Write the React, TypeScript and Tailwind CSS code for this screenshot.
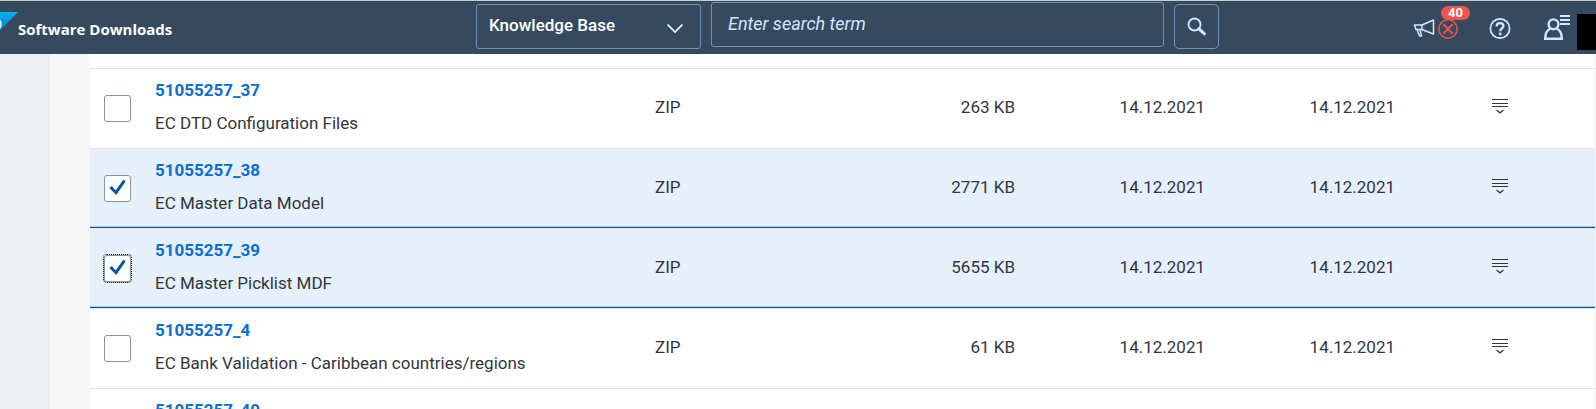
import { useState } from "react";

interface DownloadItem {
  id: string;
  description: string;
  type: string;
  size: string;
  released: string;
  changed: string;
}

const items: DownloadItem[] = [
  { id: "51055257_37", description: "EC DTD Configuration Files", type: "ZIP", size: "263 KB", released: "14.12.2021", changed: "14.12.2021" },
  { id: "51055257_38", description: "EC Master Data Model", type: "ZIP", size: "2771 KB", released: "14.12.2021", changed: "14.12.2021" },
  { id: "51055257_39", description: "EC Master Picklist MDF", type: "ZIP", size: "5655 KB", released: "14.12.2021", changed: "14.12.2021" },
  { id: "51055257_4", description: "EC Bank Validation - Caribbean countries/regions", type: "ZIP", size: "61 KB", released: "14.12.2021", changed: "14.12.2021" },
  { id: "51055257_40", description: "", type: "", size: "", released: "", changed: "" },
];

function Logo() {
  return (
    <svg width="18" height="20" viewBox="0 0 18 20" aria-hidden="true">
      <defs>
        <linearGradient id="logo" x1="0" y1="0" x2="0" y2="1">
          <stop offset="0" stopColor="#00b4f0" />
          <stop offset="1" stopColor="#0a7fc8" />
        </linearGradient>
      </defs>
      <path d="M0 0H18L0 18.500Z" fill="url(#logo)" />
      <path d="M0 7.500C2.300 9 2.300 15 0 17Z" fill="#d8eefa" />
    </svg>
  );
}

function SearchIcon() {
  return (
    <svg width="20" height="20" viewBox="0 0 20 20" fill="none" stroke="#d1e8ff" aria-hidden="true">
      <circle cx="7.500" cy="7.500" r="6" strokeWidth="1.800" />
      <path d="M12 12L17.500 16.800" strokeWidth="3" strokeLinecap="round" />
    </svg>
  );
}

function MegaphoneIcon() {
  return (
    <svg width="22" height="18" viewBox="0 0 22 18" fill="none" stroke="#d1e8ff" strokeWidth="1.500" strokeLinejoin="round" aria-hidden="true">
      <path d="M9 6H1.500L3 10.500H9" />
      <path d="M9 6L20.500 1V15L9 10.500Z" />
      <path d="M4 10.500L6.500 17H8.500L7 10.500" />
    </svg>
  );
}

function ErrorIcon() {
  return (
    <svg width="20" height="20" viewBox="0 0 20 20" fill="none" stroke="#f0524f" strokeWidth="1.500" aria-hidden="true">
      <circle cx="10" cy="10" r="9.200" />
      <path d="M5.300 5.300L14.700 14.700M14.700 5.300L5.300 14.700" strokeWidth="2" />
    </svg>
  );
}

function HelpIcon() {
  return (
    <svg width="22" height="22" viewBox="0 0 22 22" fill="none" stroke="#d1e8ff" aria-hidden="true">
      <circle cx="11" cy="10.500" r="9.600" strokeWidth="1.700" />
      <path d="M7.600 8.500C7.600 6.200 9 5.200 11 5.200S14.400 6.200 14.400 8C14.400 10.300 11.200 10.500 11.200 13.200" strokeWidth="2.300" />
      <path d="M11.200 14.700V17.200" strokeWidth="2.500" />
    </svg>
  );
}

function UserIcon() {
  return (
    <svg width="28" height="27" viewBox="0 0 28 27" fill="none" stroke="#d1e8ff" strokeWidth="2.400" aria-hidden="true">
      <circle cx="10.500" cy="10.300" r="4.900" />
      <path d="M7.500 14.500C4 16 2.200 18.500 2.200 24.800H18.800C18.800 18.500 17 16 13.500 14.500" />
      <path d="M17 2H27M17 6H27M17 10H27" strokeWidth="2" />
    </svg>
  );
}

function MenuIcon() {
  return (
    <svg width="16" height="16" viewBox="0 0 16 16" fill="none" stroke="#32363a" aria-hidden="true">
      <path d="M0 0.500H16M0 4.500H16M0 7.500H16" />
      <path d="M4.500 11L8 13.800L11.500 11" strokeWidth="1.300" />
    </svg>
  );
}

function Header() {
  return (
    <header className="flex h-[54px] shrink-0 items-start border-t border-[#c9cdc6] bg-[#354a5f]">
      <div className="flex w-[476px] items-start pt-[11px]">
        <Logo />
        <h1 className="pt-[5px] font-['Open_Sans',sans-serif] text-[15px] leading-6 font-bold text-white">Software Downloads</h1>
      </div>
      <div className="flex flex-1 items-start pt-px">
        <div className="relative mt-0.5 w-[225px]">
          <select
            aria-label="Search area"
            className="h-[45px] w-full appearance-none rounded-[3px] border border-[#7493b8] bg-transparent pr-10 pb-0.5 pl-3 text-[17px] font-medium text-white"
          >
            <option>Knowledge Base</option>
          </select>
          <svg className="pointer-events-none absolute top-[19px] right-[17px]" width="18" height="11" viewBox="0 0 18 11" fill="none" stroke="#fff" strokeWidth="1.700" aria-hidden="true">
            <path d="M1.500 1.500L9 9L16.500 1.500" />
          </svg>
        </div>
        <input
          type="search"
          aria-label="Search"
          placeholder="Enter search term"
          className="ml-2.5 h-[45px] min-w-0 flex-1 rounded-[3px] border border-[#7493b8] bg-transparent px-4 pb-0.5 text-[18px] text-white italic placeholder:text-[#d1e8ff]"
        />
        <button type="button" aria-label="Start search" className="mt-0.5 ml-2.5 flex h-[45px] w-[45px] items-center justify-center rounded-[5px] border border-[#7493b8]">
          <SearchIcon />
        </button>
      </div>
      <div className="flex w-[377px] items-start justify-end pt-[13px]">
        <button type="button" aria-label="40 notifications" className="relative mr-[31px] flex items-start gap-[3px] pt-[5px]">
          <MegaphoneIcon />
          <ErrorIcon />
          <span className="absolute -top-2 -right-3 h-3.5 w-[29px] rounded-full bg-[#f0524f] text-center text-[13px] leading-[14px] font-bold text-white">40</span>
        </button>
        <button type="button" aria-label="Help" className="mr-8 pt-1">
          <HelpIcon />
        </button>
        <button type="button" aria-label="User menu" className="mr-1.5">
          <UserIcon />
        </button>
        <div className="h-9 w-[19px] bg-black" />
      </div>
    </header>
  );
}

interface ItemRowProps {
  item: DownloadItem;
  selected: boolean;
  focused: boolean;
  onToggle: () => void;
}

function ItemRow({ item, selected, focused, onToggle }: ItemRowProps) {
  const background = selected
    ? "bg-[#e5f0fa] *:shadow-[inset_0_-1px_0_#0a559c,inset_0_-2px_0_#a9c8e4]"
    : "bg-white";
  const outline = focused ? "outline-1 outline-dotted outline-black" : "";

  return (
    <tr className={`h-20 *:border-b *:border-[#e4e4e4] ${background}`}>
      <td className="p-0">
        <div className="flex pl-3.5">
          <input
            type="checkbox"
            aria-label={`Select ${item.id}`}
            checked={selected}
            onChange={onToggle}
            className={`peer h-[27px] w-[27px] appearance-none rounded-[3px] border border-[#89919a] bg-white ${outline}`}
          />
          <svg className="pointer-events-none -ml-[27px] hidden peer-checked:block" width="27" height="27" viewBox="0 0 27 27" fill="none" stroke="#0b549c" strokeWidth="3" aria-hidden="true">
            <path d="M6.500 12L12 17.700L20.500 5.500" />
          </svg>
        </div>
      </td>
      <td className="p-0">
        <div className="flex h-[79px] flex-col items-start pt-[5px] leading-[33px]">
          <a href={`#${item.id}`} className="font-bold text-[#0a6ed1]">
            {item.id}
          </a>
          <span>{item.description}</span>
        </div>
      </td>
      <td className="p-0 pb-0.5">{item.type}</td>
      <td className="p-0 pb-0.5 text-right">{item.size}</td>
      <td className="p-0 pb-0.5 text-right">{item.released}</td>
      <td className="p-0 pb-0.5 text-right">{item.changed}</td>
      <td className="p-0 pb-1">
        <div className="flex justify-center pl-2.5">
          {item.type && (
            <button type="button" aria-label={`Actions for ${item.id}`}>
              <MenuIcon />
            </button>
          )}
        </div>
      </td>
    </tr>
  );
}

export default function App() {
  const [selected, setSelected] = useState(["51055257_38", "51055257_39"]);
  const lastSelected = selected[selected.length - 1];

  const toggle = (id: string) =>
    setSelected((ids) => (ids.includes(id) ? ids.filter((i) => i !== id) : [...ids, id]));

  return (
    <div className="flex h-screen flex-col overflow-hidden bg-white font-[Roboto,sans-serif] text-[#32363a]">
      <Header />
      <div className="flex min-h-0 flex-1">
        <div className="w-[50px] shrink-0 bg-[#edeff0]" />
        <div className="w-10 shrink-0 bg-[#f7f7f7]" />
        <main className="min-w-0 flex-1 overflow-hidden border-r border-[#f2f2f2] pt-3.5">
          <table className="w-full table-fixed border-separate border-spacing-0 border-t border-[#e4e4e4] text-[17px]">
            <colgroup>
              <col className="w-[65px]" />
              <col />
              <col className="w-[180px]" />
              <col className="w-[180px]" />
              <col className="w-[190px]" />
              <col className="w-[190px]" />
              <col className="w-[200px]" />
            </colgroup>
            <tbody>
              {items.map((item) => (
                <ItemRow
                  key={item.id}
                  item={item}
                  selected={selected.includes(item.id)}
                  focused={item.id === lastSelected}
                  onToggle={() => toggle(item.id)}
                />
              ))}
            </tbody>
          </table>
        </main>
      </div>
    </div>
  );
}
